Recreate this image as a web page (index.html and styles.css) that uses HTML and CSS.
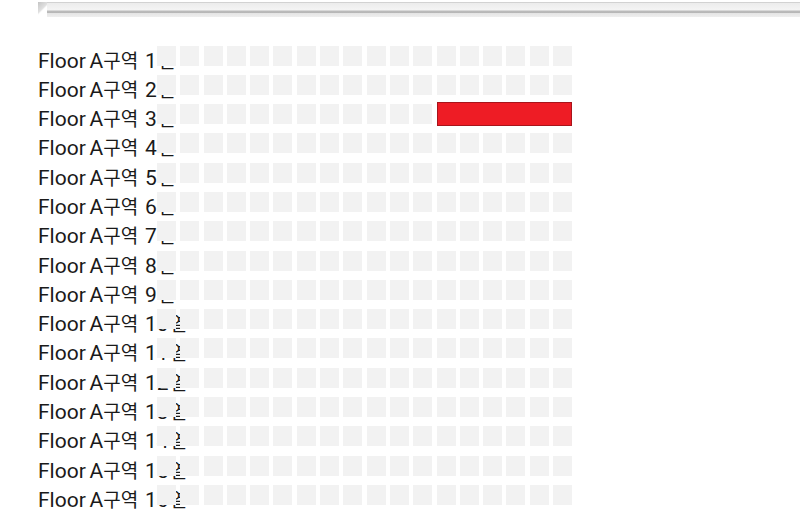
FILE: index.html
```html
<!DOCTYPE html>
<html>
	<head>
		<meta charset="utf-8">
		<title>좌석 선택</title>
		<link rel="stylesheet" href="styles.css">
	</head>
	<body>
		<div class="rail"></div>
		<div class="seat_map" id="seat_map"></div>
		<script>
			// 16열 x 18석, 3열 13~18번은 선택된 구간
			var map = document.getElementById("seat_map");
			for (var r = 1; r <= 16; r++) {
				var row = document.createElement("div");
				row.className = "seat_row";
				var label = document.createElement("span");
				label.className = "row_label";
				label.innerHTML = "Floor A<span class=\"ko gu\">구역</span> " + r + "<span class=\"ko yeol\">열</span>";
				row.appendChild(label);
				var seats = document.createElement("div");
				seats.className = "seats";
				var count = (r == 3) ? 12 : 18;
				for (var s = 0; s < count; s++) {
					var seat = document.createElement("span");
					seat.className = "seat";
					seats.appendChild(seat);
				}
				if (r == 3) {
					var pick = document.createElement("span");
					pick.className = "seat_pick";
					seats.appendChild(pick);
				}
				row.appendChild(seats);
				map.appendChild(row);
			}
		</script>
	</body>
</html>
```

FILE: styles.css
```css
body {
    margin: 0;
    background: #fff;
    font-family: Roboto, "Noto Sans CJK KR", sans-serif;
}
/* 상단 레일 */
.rail {
    position: relative;
    margin: 2px 0 0 38px;
    height: 15px;
    background: linear-gradient(#d2d2d2 0, #d2d2d2 1px, #ececec 1px, #f4f4f4 8px, #bcbcbc 9px, #b6b6b6 11px, #e4e4e4 11px, #efefef 15px);
}
.rail::before {
    content: "";
    position: absolute;
    left: 0;
    top: 0;
    width: 9px;
    height: 15px;
    background: linear-gradient(135deg, #c4c4c4 0, #e0e0e0 45%, #fff 55%);
}
.seat_map {
    margin-top: 28.5px;
}
.seat_row {
    display: grid;
    height: 29.3px;
    line-height: 29.3px;
}
.row_label, .seats {
    grid-area: 1 / 1;
}
.row_label {
    padding: 1px 0 0 38px;
    font-size: 21px;
    word-spacing: -1.5px;
    color: #1a1a1a;
}
.row_label .ko {
    font-size: 19px;
}
.row_label .gu {
    margin-right: 3px;
}
.row_label .yeol {
    padding-left: 1px;
}
.seats {
    display: flex;
    align-items: flex-start;
    gap: 4.3px;
    margin-left: 157px;
    z-index: 1;
}
.seat {
    width: 19px;
    height: 20px;
    background: #f2f2f2;
}
.seat_pick {
    width: 133.5px;
    height: 22px;
    margin-top: -2px;
    background: #ee1c25;
    border: 1px solid #a8141b;
}
```
